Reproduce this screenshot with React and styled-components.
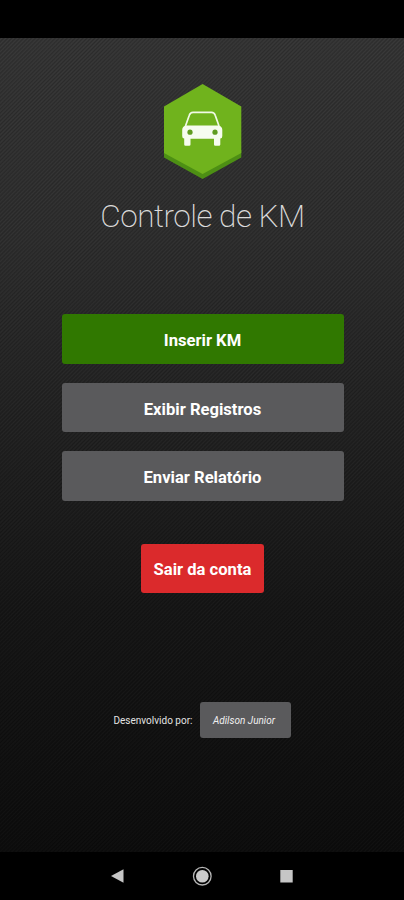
import styled, { createGlobalStyle } from "styled-components";

const App = () => {
	return (
		<ScreenSC>
			<GlobalStyle />
			<StatusBarSC />
			<HomeSC>
				<Logo />
				<TitleSC>Controle de KM</TitleSC>
				<MenuSC>
					<ButtonSC $color="#307800">Inserir KM</ButtonSC>
					<ButtonSC>Exibir Registros</ButtonSC>
					<ButtonSC>Enviar Relatório</ButtonSC>
				</MenuSC>
				<LogoutSC $color="#db2a2c">Sair da conta</LogoutSC>
				<FooterSC>
					<span>Desenvolvido por:</span>
					<AuthorSC>Adilson Junior</AuthorSC>
				</FooterSC>
			</HomeSC>
			<NavBar />
		</ScreenSC>
	);
};

const Logo = () => {
	return (
		<LogoSC viewBox="0 0 78 95" aria-label="Controle de KM">
			<path d="M0 66 L38.6 84 L77.3 66 V73.5 L38.6 95 L0 73.5Z" fill="#4d8f14" />
			<path d="M38.6 0 L77.3 22.5 V69 L38.6 90 L0 69 V22.5Z" fill="#70b31d" />
			{/* Car */}
			<path
				d="M21.5 42 L25.3 31.3 Q26.2 28.3 29 28.3 H47.5 Q50.3 28.3 51.2 31.3 L55 42"
				fill="none"
				stroke="#f1fae6"
				strokeWidth="1.7"
			/>
			<path
				d="M21.5 41.5 H55 Q58.3 42.5 58.3 46 V52 Q58.3 54.5 56.3 54.5 V60.5 Q56.3 61.8 55 61.8 H51.3 Q50 61.8 50 60.5 V54.8 H26.5 V60.5 Q26.5 61.8 25.2 61.8 H21.5 Q20.2 61.8 20.2 60.5 V54.5 Q18.2 54.5 18.2 52 V46 Q18.2 42.5 21.5 41.5Z"
				fill="#f6fcef"
			/>
			<circle cx="26" cy="48.2" r="2.6" fill="#5f9c20" />
			<circle cx="51" cy="48.2" r="2.6" fill="#5f9c20" />
		</LogoSC>
	);
};

const NavBar = () => {
	return (
		<NavBarSC>
			<svg width="20" height="20" viewBox="0 0 20 20">
				<path d="M3 10 L15.5 3.3 V16.7Z" fill="#c6c6c6" />
			</svg>
			<svg width="20" height="20" viewBox="0 0 20 20">
				<circle cx="10.3" cy="10.2" r="8.8" fill="none" stroke="#b5b5b5" strokeWidth="1.3" />
				<circle cx="10.3" cy="10.2" r="6.3" fill="#cacaca" />
			</svg>
			<svg width="20" height="20" viewBox="0 0 20 20">
				<path d="M3.3 4 H15.7 V16.5 H3.3Z" fill="#c6c6c6" />
			</svg>
		</NavBarSC>
	);
};

const GlobalStyle = createGlobalStyle`
	* {
		margin: 0;
		padding: 0;
		box-sizing: border-box;
	}
	body {
		background: #000;
		font-family: Roboto, sans-serif;
	}
`;

const ScreenSC = styled.div`
	display: flex;
	flex-direction: column;
	width: 404px;
	height: 900px;
	overflow: hidden;
	background: #000;
`;

const StatusBarSC = styled.div`
	height: 38px;
`;

const HomeSC = styled.main`
	display: flex;
	flex-direction: column;
	align-items: center;
	height: 814px;
	padding-top: 46px;
	padding-left: 1px;
	background:
		repeating-linear-gradient(
			135deg,
			rgba(0, 0, 0, 0.18) 0px,
			rgba(255, 255, 255, 0.015) 1.4px,
			rgba(0, 0, 0, 0.18) 2.8px
		),
		linear-gradient(#363636 0%, #2f2f2f 25%, #222222 48%, #161616 70%, #0c0c0c 100%);
`;

const LogoSC = styled.svg`
	width: 78px;
	height: 95px;
`;

const TitleSC = styled.h1`
	margin-top: 19px;
	color: #dadada;
	font-size: 31.5px;
	font-weight: 200;
	letter-spacing: -0.5px;
	line-height: 38px;
`;

const MenuSC = styled.div`
	display: flex;
	flex-direction: column;
	gap: 19px;
	width: 282px;
	margin-top: 78px;
`;

const ButtonSC = styled.button`
	height: 49.7px;
	padding-top: 3px;
	border: none;
	border-radius: 3px;
	background: ${({ $color }) => $color || "#5a5a5c"};
	color: #fff;
	font-family: inherit;
	font-size: 16.6px;
	font-weight: 700;
`;

const LogoutSC = styled(ButtonSC)`
	width: 123px;
	padding-top: 2px;
	margin-top: 42.5px;
`;

const FooterSC = styled.footer`
	display: flex;
	align-items: center;
	gap: 8px;
	margin-top: 108.5px;
	color: #e2e2e2;
	font-size: 10px;
`;

const AuthorSC = styled(ButtonSC)`
	width: 91px;
	height: 36.5px;
	padding: 0 4px 0 0;
	color: #f0f0f0;
	font-size: 10px;
	font-style: italic;
	font-weight: 400;
`;

const NavBarSC = styled.nav`
	display: flex;
	align-items: center;
	justify-content: center;
	gap: 64.5px;
	height: 48px;
`;

export default App;
